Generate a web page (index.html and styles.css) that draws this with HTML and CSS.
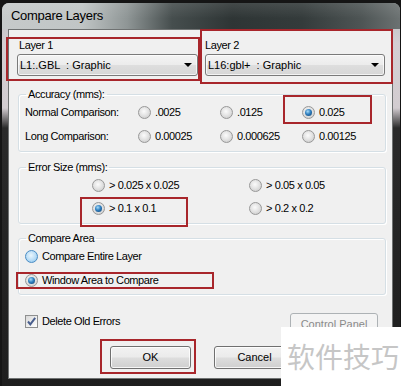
FILE: index.html
```html
<!DOCTYPE html>
<html>
<head>
<meta charset="utf-8">
<title>Compare Layers</title>
<link rel="stylesheet" href="styles.css">
</head>
<body>
<div class="window">
  <div class="titlebar"><span class="title">Compare Layers</span></div>
  <div class="client">
    <div class="layers">
      <div class="layer-col col1">
        <div class="label">Layer 1</div>
        <div class="combo"><span class="combo-text">L1:.GBL  : Graphic</span><span class="arrow"></span></div>
      </div>
      <div class="layer-col col2">
        <div class="label">Layer 2</div>
        <div class="combo"><span class="combo-text">L16:gbl+  : Graphic</span><span class="arrow"></span></div>
      </div>
    </div>

    <fieldset class="group accuracy">
      <legend>Accuracy (mms):</legend>
      <div class="acc-grid">
        <span class="row-label">Normal Comparison:</span>
        <span class="opt"><span class="radio"></span>.0025</span>
        <span class="opt"><span class="radio"></span>.0125</span>
        <span class="opt"><span class="radio checked"></span>0.025</span>
        <span class="row-label">Long Comparison:</span>
        <span class="opt"><span class="radio"></span>0.00025</span>
        <span class="opt"><span class="radio"></span>0.000625</span>
        <span class="opt"><span class="radio"></span>0.00125</span>
      </div>
    </fieldset>

    <fieldset class="group errsize">
      <legend>Error Size (mms):</legend>
      <div class="err-grid">
        <span class="opt"><span class="radio"></span>&gt; 0.025 x 0.025</span>
        <span class="opt"><span class="radio"></span>&gt; 0.05 x 0.05</span>
        <span class="opt"><span class="radio checked"></span>&gt; 0.1 x 0.1</span>
        <span class="opt"><span class="radio"></span>&gt; 0.2 x 0.2</span>
      </div>
    </fieldset>

    <fieldset class="group area">
      <legend>Compare Area</legend>
      <div class="area-list">
        <span class="opt"><span class="radio hover"></span>Compare Entire Layer</span>
        <span class="opt"><span class="radio checked"></span>Window Area to Compare</span>
      </div>
    </fieldset>

    <div class="options-row">
      <span class="opt check-opt"><span class="checkbox"><svg viewBox="0 0 11 11" width="11" height="11"><path d="M2 5.5 L4.3 8.3 L9.2 1.8" fill="none" stroke="#4a5f8e" stroke-width="2"/></svg></span>Delete Old Errors</span>
      <span class="btn disabled panel-btn">Control Panel</span>
    </div>

    <div class="buttons-row">
      <span class="btn ok-btn">OK</span>
      <span class="btn cancel-btn">Cancel</span>
    </div>
  </div>
</div>

<div class="mark mark-layer1"></div>
<div class="mark mark-layer2"></div>
<div class="mark mark-acc"></div>
<div class="mark mark-err"></div>
<div class="mark mark-area"></div>
<div class="mark mark-ok"></div>

<div class="watermark">软件技巧</div>
</body>
</html>
```

FILE: styles.css
```css
html, body {
  margin: 0;
  padding: 0;
}
body {
  width: 401px;
  height: 386px;
  overflow: hidden;
  position: relative;
  background: #151515;
  font-family: "Liberation Sans", Arial, sans-serif;
  font-size: 11px;
  line-height: 13px;
  color: #000;
}

.window {
  margin: 3px 0 0 2px;
  width: 398px;
  height: 383px;
  border-radius: 7px 7px 0 0;
  background: linear-gradient(180deg, #b4baba 0px, #d4ced2 40px, #d2ccd0 105px, #2a2a2a 125px, #1e1e1e 100%);
  display: flex;
  flex-direction: column;
  overflow: hidden;
}

.titlebar {
  height: 26px;
  padding-left: 9px;
  display: flex;
  align-items: flex-start;
  background:
    linear-gradient(180deg, rgba(255,255,255,0.10) 0%, rgba(255,255,255,0) 60%),
    linear-gradient(90deg, #c6caca 0px, #c0c5c5 80px, #8f9696 125px, #464e4e 170px, #2e3535 230px, #343b3b 300px, #4e5555 360px, #6c7272 398px);
}
.title {
  margin-top: 5px;
  font-size: 13px;
  line-height: 16px;
  letter-spacing: -0.3px;
  color: #000;
}

.client {
  margin-left: 6px;
  width: 385px;
  height: 350px;
  box-sizing: border-box;
  border: 1px solid #6f7272;
  background: #f0f0f0;
  letter-spacing: -0.4px;
}

/* layer selectors */
.layers {
  display: flex;
  padding: 9px 0 0 8px;
  gap: 7px;
}
.layer-col {
  display: flex;
  flex-direction: column;
  gap: 2px;
}
.col1 { width: 181px; }
.col1 .label { padding-left: 2px; }
.col2 { width: 180px; }
.combo {
  height: 22px;
  box-sizing: border-box;
  border: 1px solid #7a7a7a;
  border-radius: 3px;
  background: linear-gradient(180deg, #f4f4f4 0%, #ececec 48%, #dedede 52%, #d6d6d6 100%);
  display: flex;
  align-items: center;
  justify-content: space-between;
  padding: 0 5px 0 2px;
  box-shadow: inset 0 0 0 1px rgba(255,255,255,0.7);
}
.combo-text {
  white-space: pre;
  letter-spacing: 0;
  font-size: 11px;
}
.arrow {
  width: 0;
  height: 0;
  border-left: 4px solid transparent;
  border-right: 4px solid transparent;
  border-top: 4px solid #000;
}

/* group boxes */
.group {
  margin: 0 0 0 9px;
  padding: 0;
  width: 368px;
  box-sizing: border-box;
  min-width: 0;
  border: 1px solid #d5dfe5;
  border-radius: 3px;
  box-shadow: inset 1px 1px 0 #fff, 1px 1px 0 #fff;
}
.group legend {
  margin-left: 7px;
  padding: 0 2px;
  font-size: 11px;
  line-height: 13px;
}
.accuracy { margin-top: 12px; }
.errsize { margin-top: 9px; }
.area { margin-top: 8px; }

.acc-grid {
  display: grid;
  grid-template-columns: 113px 82px 82px 1fr;
  grid-auto-rows: 24px;
  align-items: center;
  margin-top: -1px;
  padding: 0 0 3px 6px;
}
.err-grid {
  display: grid;
  grid-template-columns: 157px 1fr;
  grid-auto-rows: 23px;
  align-items: center;
  padding: 0 0 3px 73px;
}
.area-list {
  display: grid;
  grid-auto-rows: 24px;
  align-items: center;
  margin-top: -1px;
  padding: 0 0 2px 6px;
}

.opt {
  display: flex;
  align-items: center;
  gap: 4px;
  white-space: nowrap;
}

.radio {
  flex: none;
  width: 13px;
  height: 13px;
  box-sizing: border-box;
  border-radius: 50%;
  border: 1px solid #989898;
  background: radial-gradient(circle at 45% 40%, #fbfbfb 0%, #e4e4e4 45%, #c4c4c4 100%);
  position: relative;
}
.radio.hover {
  border-color: #4a8cc4;
  background: radial-gradient(circle at 45% 40%, #eaf6fd 0%, #b8dcf6 55%, #7fbfe8 100%);
}
.radio.checked::after {
  content: "";
  position: absolute;
  left: 2px;
  top: 2px;
  width: 7px;
  height: 7px;
  border-radius: 50%;
  background: radial-gradient(circle at 40% 35%, #a8dcf8 0%, #2f7fc0 45%, #0f3d6a 100%);
}

/* bottom rows */
.options-row {
  display: flex;
  justify-content: space-between;
  align-items: flex-start;
  margin-top: 18px;
  padding: 0 14px 0 16px;
}
.check-opt {
  margin-top: 2px;
}
.checkbox {
  flex: none;
  width: 13px;
  height: 13px;
  box-sizing: border-box;
  border: 1px solid #8e8f8f;
  background: linear-gradient(135deg, #d8d8d8 0%, #f4f4f4 70%, #ffffff 100%);
  display: flex;
  align-items: center;
  justify-content: center;
}
.checkbox svg { display: block; }

.btn {
  display: flex;
  align-items: center;
  justify-content: center;
  height: 23px;
  box-sizing: border-box;
  border: 1px solid #707070;
  border-radius: 3px;
  background: linear-gradient(180deg, #f2f2f2 0%, #ebebeb 48%, #dddddd 52%, #cfcfcf 100%);
  box-shadow: inset 0 0 0 1px rgba(255,255,255,0.8);
  letter-spacing: 0;
}
.btn.disabled {
  border-color: #adb2b5;
  background: #f4f4f4;
  color: #8a8a8a;
  box-shadow: none;
}
.panel-btn { width: 88px; }

.buttons-row {
  display: flex;
  margin-top: 10px;
  padding-left: 101px;
  gap: 23px;
}
.ok-btn, .cancel-btn { width: 81px; }

/* red annotation boxes */
.mark {
  position: absolute;
  border: 2px solid #a8262b;
  box-sizing: border-box;
}
.mark-layer1 { left: 6px; top: 37px; width: 194px; height: 44px; }
.mark-layer2 { left: 200px; top: 29px; width: 193px; height: 55px; }
.mark-acc { left: 283px; top: 95px; width: 89px; height: 29px; }
.mark-err { left: 80px; top: 197px; width: 108px; height: 30px; }
.mark-area { left: 16px; top: 272px; width: 198px; height: 17px; }
.mark-ok { left: 100px; top: 339px; width: 96px; height: 35px; }

/* watermark overlay */
.watermark {
  position: absolute;
  left: 281px;
  top: 327px;
  width: 120px;
  height: 59px;
  background: #fff;
  color: #c6c6c6;
  font-family: "Noto Sans CJK SC", "Noto Sans", sans-serif;
  font-size: 28px;
  line-height: 59px;
  padding-left: 6px;
  box-sizing: border-box;
  white-space: nowrap;
  letter-spacing: 0;
}
```
